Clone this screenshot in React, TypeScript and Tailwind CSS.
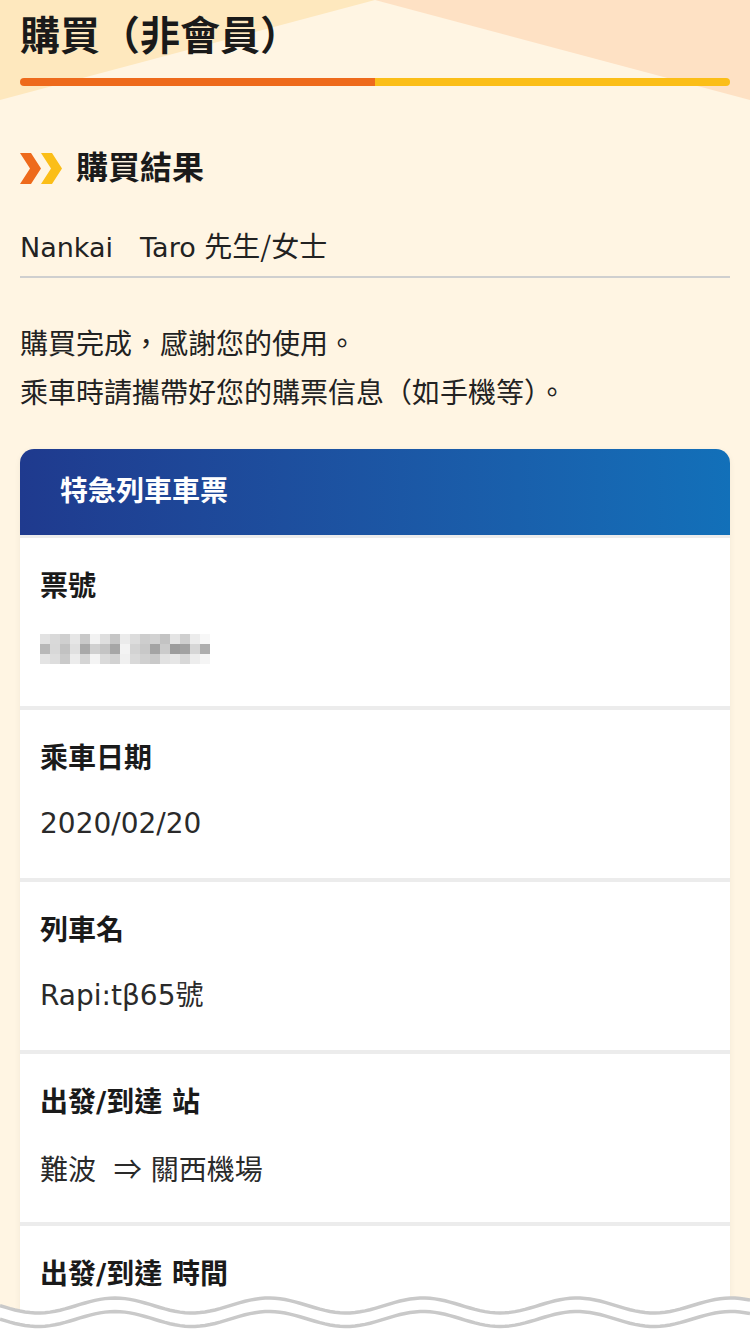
import React from "react";

const FONT = '"DejaVu Sans", "Noto Sans CJK TC", "Noto Sans", sans-serif';
const CJK = '"Noto Sans CJK TC", sans-serif';

const mosaic: string[][] = [
  ["#e2e2e2","#d9d9d9","#cfcfcf","#e6e6e6","#c9c9c9","#f2f2f2","#dedede","#c6c6c6","#ebebeb","#dcdcdc","#cdcdcd","#d2d2d2","#c3c3c3","#e4e4e4","#cfcfcf","#ececec","#f7f7f7"],
  ["#b8b8b8","#d8d8d8","#c2c2c2","#e0e0e0","#a9a9a9","#d0d0d0","#c4c4c4","#a6a6a6","#f3f3f3","#d3d3d3","#c8c8c8","#a4a4a4","#cbcbcb","#9c9c9c","#a2a2a2","#d6d6d6","#aeaeae"],
  ["#e4e4e4","#dddddd","#cacaca","#ececec","#d5d5d5","#f4f4f4","#dadada","#d2d2d2","#f0f0f0","#d9d9d9","#d0d0d0","#c9c9c9","#e2e2e2","#e6e6e6","#d8d8d8","#ededed","#f5f5f5"],
];

function Mosaic() {
  return (
    <svg width={170} height={30} viewBox="0 0 170 30" className="block">
      {mosaic.map((row, r) =>
        row.map((c, i) => <rect key={`${r}-${i}`} x={i * 10} y={r * 10} width={10} height={10} fill={c} />)
      )}
    </svg>
  );
}

function wavePoints(center: number, amp: number) {
  const pts: string[] = [];
  for (let x = 0; x <= 750; x += 5) {
    const y = center - amp * Math.cos((2 * Math.PI * (x - 115)) / 154);
    pts.push(`${x},${y.toFixed(2)}`);
  }
  return pts;
}

function Wave() {
  const upper = wavePoints(21.5, 7.5);
  const lower = wavePoints(35, 7.5);
  const fill = `M${upper.join(" L")} L750,50 L0,50 Z`;
  return (
    <svg width={750} height={50} viewBox="0 0 750 50" className="absolute bottom-0 left-0 block">
      <path d={fill} fill="#ffffff" />
      <polyline points={upper.join(" ")} fill="none" stroke="#c9c9c9" strokeWidth={3.5} />
      <polyline points={lower.join(" ")} fill="none" stroke="#c9c9c9" strokeWidth={3.5} />
    </svg>
  );
}

function Row({ label, children }: { label: string; children?: React.ReactNode }) {
  return (
    <div className="h-[168px] bg-white px-5 pt-[31px]">
      <div className="text-[28px] font-bold leading-[36px] text-[#1a1a1a]">{label}</div>
      {children ? <div className="mt-[27px] text-[28px] leading-[40px] text-[#2a2a2a]">{children}</div> : null}
    </div>
  );
}

export default function App() {
  return (
    <div className="relative h-[1334px] w-[750px] overflow-hidden bg-[#fff5e3]" style={{ fontFamily: FONT }}>
      <svg width={750} height={110} viewBox="0 0 750 110" className="absolute left-0 top-0 block">
        <polygon points="0,0 375,0 0,100" fill="#fee8be" />
        <polygon points="375,0 750,0 750,100" fill="#fee1c4" />
      </svg>
      <div className="relative px-5 pt-2">
        <h1 className="text-[40px] font-bold leading-[56px] text-[#1a1a1a]">購買（非會員）</h1>
        <div className="mt-[14px] flex h-2 overflow-hidden rounded-full">
          <div className="flex-1 bg-[#ee6a1c]" />
          <div className="flex-1 bg-[#fbbe18]" />
        </div>

        <div className="mt-[60px] flex h-[44px] items-center gap-[14px]">
          <svg width={42} height={31} viewBox="0 0 42 31" className="block">
            <polygon points="0,0 11,0 21,15.5 11,31 0,31 10,15.5" fill="#ee6a1c" />
            <polygon points="21,0 32,0 42,15.5 32,31 21,31 31,15.5" fill="#fbbe18" />
          </svg>
          <h2 className="text-[32px] font-bold leading-[44px] text-[#1a1a1a]">購買結果</h2>
        </div>

        <div className="mt-[35px] border-b-2 border-[#cfcfcf] pb-[8px] text-[27px] leading-[40px] text-[#222]">
          Nankai　Taro <span className="text-[28px]" style={{ fontFamily: CJK }}>先生/女士</span>
        </div>

        <div className="mt-[42px] text-[28px] leading-[49px] text-[#222]">
          <p>購買完成，感謝您的使用。</p>
          <p>乘車時請攜帶好您的購票信息（如手機等）。</p>
        </div>

        <div className="mt-[31px] overflow-hidden rounded-t-[14px] shadow-[0_2px_6px_rgba(0,0,0,0.06)]">
          <div className="flex h-[86px] items-center bg-gradient-to-r from-[#1f3a8e] to-[#1270b9] px-10">
            <span className="text-[28px] font-bold text-white">特急列車車票</span>
          </div>
          <div className="flex flex-col gap-1 bg-[#ececec] pt-[3px]">
            <Row label="票號">
              <div className="pt-[2px]">
                <Mosaic />
              </div>
            </Row>
            <Row label="乘車日期">2020/02/20</Row>
            <Row label="列車名">Rapi:tβ65號</Row>
            <Row label="出發/到達 站">
              難波&nbsp;&nbsp;<span style={{ fontFamily: CJK }}>⇒</span> 關西機場
            </Row>
            <Row label="出發/到達 時間" />
          </div>
        </div>
      </div>
      <Wave />
    </div>
  );
}
